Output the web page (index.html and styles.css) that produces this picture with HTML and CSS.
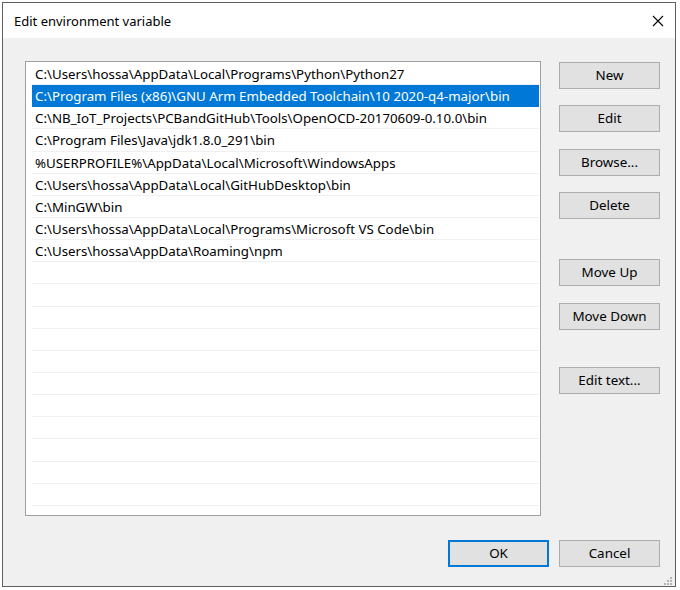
FILE: index.html
```html
<!DOCTYPE html>
<html>
<head>
<meta charset="utf-8">
<link rel="stylesheet" href="styles.css">
</head>
<body>
<div class="window">
  <div class="titlebar">
    <span class="title">Edit environment variable</span>
    <svg class="close" width="12" height="12" viewBox="0 0 12 12"><path d="M1 1L11 11M11 1L1 11" stroke="#000" stroke-width="1.1" fill="none"/></svg>
  </div>
  <div class="content">
    <div class="main">
      <div class="list">
        <div class="row">C:\Users\hossa\AppData\Local\Programs\Python\Python27</div>
        <div class="row sel">C:\Program Files (x86)\GNU Arm Embedded Toolchain\10 2020-q4-major\bin</div>
        <div class="row">C:\NB_IoT_Projects\PCBandGitHub\Tools\OpenOCD-20170609-0.10.0\bin</div>
        <div class="row">C:\Program Files\Java\jdk1.8.0_291\bin</div>
        <div class="row">%USERPROFILE%\AppData\Local\Microsoft\WindowsApps</div>
        <div class="row">C:\Users\hossa\AppData\Local\GitHubDesktop\bin</div>
        <div class="row">C:\MinGW\bin</div>
        <div class="row">C:\Users\hossa\AppData\Local\Programs\Microsoft VS Code\bin</div>
        <div class="row">C:\Users\hossa\AppData\Roaming\npm</div>
        <div class="row"></div>
        <div class="row"></div>
        <div class="row"></div>
        <div class="row"></div>
        <div class="row"></div>
        <div class="row"></div>
        <div class="row"></div>
        <div class="row"></div>
        <div class="row"></div>
        <div class="row"></div>
        <div class="row"></div>
        <div class="row"></div>
        <div class="row"></div>
      </div>
      <div class="side">
        <div class="btn">New</div>
        <div class="btn g16">Edit</div>
        <div class="btn g17">Browse...</div>
        <div class="btn g16">Delete</div>
        <div class="btn g40">Move Up</div>
        <div class="btn g17">Move Down</div>
        <div class="btn g37">Edit text...</div>
      </div>
    </div>
    <div class="footer">
      <div class="btn default">OK</div>
      <div class="btn">Cancel</div>
    </div>
    <svg class="grip" width="9" height="9" viewBox="0 0 9 9">
      <rect x="7" y="1" width="2" height="2" fill="#b5b5b5"/>
      <rect x="4" y="4" width="2" height="2" fill="#b5b5b5"/>
      <rect x="7" y="4" width="2" height="2" fill="#b5b5b5"/>
      <rect x="1" y="7" width="2" height="2" fill="#b5b5b5"/>
      <rect x="4" y="7" width="2" height="2" fill="#b5b5b5"/>
      <rect x="7" y="7" width="2" height="2" fill="#b5b5b5"/>
    </svg>
  </div>
</div>
</body>
</html>
```

FILE: styles.css
```css
html, body {
  margin: 0;
  padding: 0;
  background: #ffffff;
}
body {
  font-family: "Noto Sans", "Open Sans", sans-serif;
  font-size: 13px;
  color: #000;
}
.window {
  margin: 2px 0 0 2px;
  width: 674px;
  height: 585px;
  box-sizing: border-box;
  border: 1px solid #5f5f5f;
  display: flex;
  flex-direction: column;
  background: #f0f0f0;
}
.titlebar {
  height: 35px;
  flex: none;
  background: #ffffff;
  display: flex;
  align-items: center;
  justify-content: space-between;
  padding: 0 11px 0 11px;
}
.title {
  font-size: 13px;
}
.close {
  margin-top: 1px;
}
.content {
  flex: 1;
  position: relative;
  display: flex;
  flex-direction: column;
}
.main {
  display: flex;
  padding: 23px 0 0 22px;
}
.list {
  width: 516px;
  height: 455px;
  box-sizing: border-box;
  border: 1px solid #a0a0a0;
  background: #fff;
  padding-top: 1px;
  overflow: hidden;
}
.row {
  height: 21.15px;
  line-height: 23px;
  border-bottom: 1px solid #f0f0f0;
  margin: 0 1px 0 6px;
  padding-left: 3px;
  white-space: nowrap;
  font-size: 13.3px;
  overflow: hidden;
}
.row.sel {
  background: #0078d7;
  color: #fff;
  border-bottom-color: #0078d7;
}
.side {
  display: flex;
  flex-direction: column;
  margin-left: 18px;
  padding-top: 1px;
}
.btn {
  width: 101px;
  height: 27px;
  box-sizing: border-box;
  border: 1px solid #adadad;
  background: #e1e1e1;
  display: flex;
  align-items: center;
  justify-content: center;
  font-size: 13.4px;
  padding-bottom: 1px;
}
.g16 { margin-top: 16px; }
.g17 { margin-top: 17px; }
.g40 { margin-top: 40px; }
.g37 { margin-top: 37px; }
.btn.default {
  border: 2px solid #0078d7;
}
.footer {
  display: flex;
  justify-content: flex-end;
  gap: 10px;
  padding: 24px 15px 0 0;
}
.grip {
  position: absolute;
  right: 3px;
  bottom: 1px;
}
```
